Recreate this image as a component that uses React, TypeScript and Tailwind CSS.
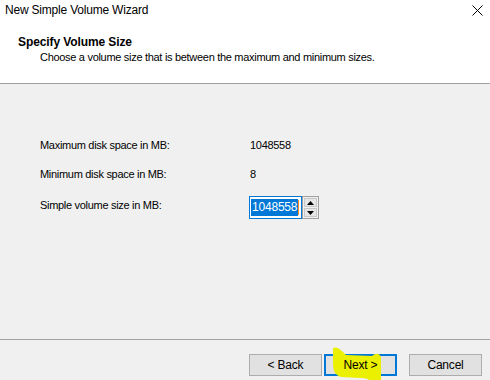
import React from "react";

export default function App() {
  const font = { fontFamily: '"Liberation Sans", Arial, sans-serif' };
  return (
    <div
      className="relative w-[490px] h-[380px] bg-white flex flex-col text-[11px] tracking-[-0.3px] text-black overflow-hidden"
      style={font}
    >
      {/* title bar */}
      <div className="h-[20px] flex items-center justify-between pl-[5px] pr-[7px] shrink-0">
        <span className="leading-[15px] text-[12px] tracking-[-0.2px]">New Simple Volume Wizard</span>
        <svg width="11" height="11" viewBox="0 0 11 11">
          <path d="M0.5 0.5 L10.5 10.5 M10.5 0.5 L0.5 10.5" stroke="#000" strokeWidth="1" />
        </svg>
      </div>
      {/* header */}
      <div className="h-[64px] shrink-0 bg-white border-b border-[#a0a0a0] pt-[15px] pl-[18px]">
        <div className="font-bold leading-[15px] text-[12px] tracking-[-0.1px]">Specify Volume Size</div>
        <div className="leading-[15px] pl-[22px]">
          Choose a volume size that is between the maximum and minimum sizes.
        </div>
      </div>
      {/* body */}
      <div className="flex-1 bg-[#f0f0f0] pl-[40px] pt-[54px] flex flex-col">
        <div className="flex leading-[15px] h-[15px]">
          <span className="w-[210px]">Maximum disk space in MB:</span>
          <span>1048558</span>
        </div>
        <div className="flex leading-[15px] h-[15px] mt-[14px]">
          <span className="w-[210px]">Minimum disk space in MB:</span>
          <span>8</span>
        </div>
        <div className="flex items-start mt-[14px]">
          <span className="w-[209px] leading-[15px] mt-[2px]">Simple volume size in MB:</span>
          <div className="h-[23px] w-[53px] bg-white border border-[#0078d7] flex items-center pl-[1px]">
            <span className="bg-[#0078d7] text-white leading-[16px] h-[17px] px-[1px] text-[12px] tracking-[-0.2px]">1048558</span>
            <span className="w-[1px] h-[15px] bg-[#ff8a1e]" />
          </div>
          <div className="h-[23px] w-[17px] border border-[#a0a0a0] bg-[#f0f0f0] flex flex-col p-[1px] gap-[1px]">
            <div className="flex-1 bg-[#e6e6e6] border border-[#c8c8c8] flex items-center justify-center">
              <svg width="7" height="4" viewBox="0 0 7 4">
                <path d="M3.5 0 L7 4 L0 4 Z" fill="#000" />
              </svg>
            </div>
            <div className="flex-1 bg-[#e6e6e6] border border-[#c8c8c8] flex items-center justify-center">
              <svg width="7" height="4" viewBox="0 0 7 4">
                <path d="M0 0 L7 0 L3.5 4 Z" fill="#000" />
              </svg>
            </div>
          </div>
        </div>
      </div>
      {/* footer */}
      <div className="h-[41px] shrink-0 bg-[#f0f0f0] border-t border-[#a0a0a0] flex items-start justify-end pt-[14px] pr-[8px]">
        <button className="w-[73px] h-[22px] bg-[#e1e1e1] border border-[#adadad] leading-[15px] text-[12px] tracking-[-0.2px]">
          &lt; Back
        </button>
        <button className="relative overflow-visible w-[73px] h-[22px] ml-[2px] bg-[#e1e1e1] border-2 border-[#0078d7] leading-[15px] text-[12px] tracking-[-0.2px]">
          {/* highlighter mark */}
          <svg
            className="absolute left-[-2px] top-[-10px] pointer-events-none"
            width="60"
            height="36"
            viewBox="0 0 60 36"
          >
            <path
              d="M9,2 C13,0 17,4 22,9 L48,10 C52,7 55,7 57,11 L57,36 L47,36 C45,33 42,32 36,32 L17,31 C11,29 9,25 9,17 Z"
              fill="#ebf000"
            />
          </svg>
          <span className="relative z-10">Next &gt;</span>
        </button>
        <button className="w-[73px] h-[22px] ml-[12px] bg-[#e1e1e1] border border-[#adadad] leading-[15px] text-[12px] tracking-[-0.2px]">
          Cancel
        </button>
      </div>
    </div>
  );
}
